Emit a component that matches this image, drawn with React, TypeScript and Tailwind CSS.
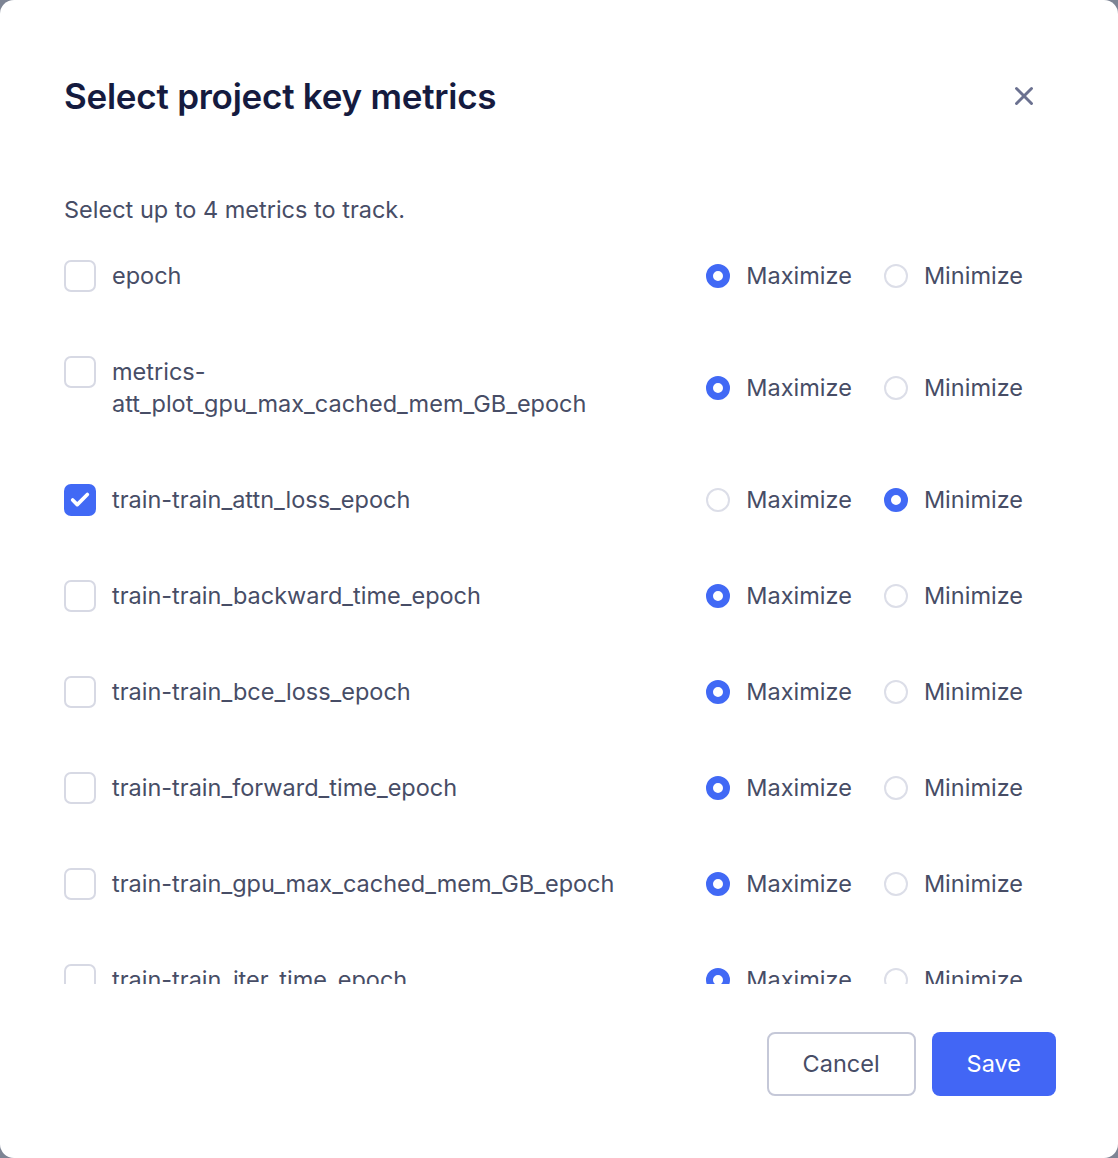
import { X, Check } from 'lucide-react';

type Metric = {
    name: string;
    checked: boolean;
    goal: 'max' | 'min';
};

const metrics: Metric[] = [
    { name: 'epoch', checked: false, goal: 'max' },
    { name: 'metrics-att_plot_gpu_max_cached_mem_GB_epoch', checked: false, goal: 'max' },
    { name: 'train-train_attn_loss_epoch', checked: true, goal: 'min' },
    { name: 'train-train_backward_time_epoch', checked: false, goal: 'max' },
    { name: 'train-train_bce_loss_epoch', checked: false, goal: 'max' },
    { name: 'train-train_forward_time_epoch', checked: false, goal: 'max' },
    { name: 'train-train_gpu_max_cached_mem_GB_epoch', checked: false, goal: 'max' },
    { name: 'train-train_iter_time_epoch', checked: false, goal: 'max' },
];

function Radio({ on, label }: { on: boolean; label: string }) {
    return (
        <div className="flex items-center gap-4">
            <span
                className={`w-6 h-6 rounded-full shrink-0 ${
                    on ? 'border-[7.5px] border-[#4169f5] bg-white' : 'border-2 border-[#dcdee8] bg-white'
                }`}
            />
            <span>{label}</span>
        </div>
    );
}

function MetricRow({ metric }: { metric: Metric }) {
    return (
        <div className="flex items-center gap-8">
            <div className="flex-1 flex items-start gap-4 min-w-0">
                {metric.checked ? (
                    <span className="w-8 h-8 rounded-[7px] bg-[#4169f5] flex items-center justify-center shrink-0">
                        <Check className="w-[22px] h-[22px] text-white" strokeWidth={4} />
                    </span>
                ) : (
                    <span className="w-8 h-8 rounded-[7px] border-2 border-[#d7d9e4] bg-white shrink-0" />
                )}
                <span className="break-words">{metric.name}</span>
            </div>
            <div className="flex items-center gap-8 shrink-0">
                <Radio on={metric.goal === 'max'} label="Maximize" />
                <Radio on={metric.goal === 'min'} label="Minimize" />
            </div>
        </div>
    );
}

export default function App() {
    return (
        <div className="h-[1158px] bg-[#7d8494]" style={{ fontFamily: 'Inter, "Noto Sans", sans-serif' }}>
            <div className="h-full bg-white rounded-[14px] flex flex-col px-16 pt-[72px] pb-[62px]">
                {/* Header */}
                <div className="flex items-center justify-between">
                    <h2 className="text-[35px] leading-[48px] font-semibold text-[#151b3f] tracking-[-0.25px]">
                        Select project key metrics
                    </h2>
                    <button className="mr-[15px] text-[#6b7190]">
                        <X className="w-[30px] h-[30px]" strokeWidth={2.3} />
                    </button>
                </div>

                {/* Body */}
                <p className="mt-[74px] text-[23.5px] leading-8 text-[#474d66]">Select up to 4 metrics to track.</p>
                <div className="mt-[34px] h-[724px] overflow-hidden pr-[31px]">
                    <div className="flex flex-col gap-16 text-[23.5px] leading-8 text-[#474d66]">
                        {metrics.map((m) => (
                            <MetricRow key={m.name} metric={m} />
                        ))}
                    </div>
                </div>

                {/* Footer */}
                <div className="mt-12 -mr-0.5 flex justify-end gap-4">
                    <button className="h-16 px-[34px] rounded-lg border-2 border-[#c5c8d8] bg-white text-[23.5px] text-[#474d66]">
                        Cancel
                    </button>
                    <button className="h-16 px-[35px] rounded-lg bg-[#4266f5] text-[23.5px] text-white">Save</button>
                </div>
            </div>
        </div>
    );
}
